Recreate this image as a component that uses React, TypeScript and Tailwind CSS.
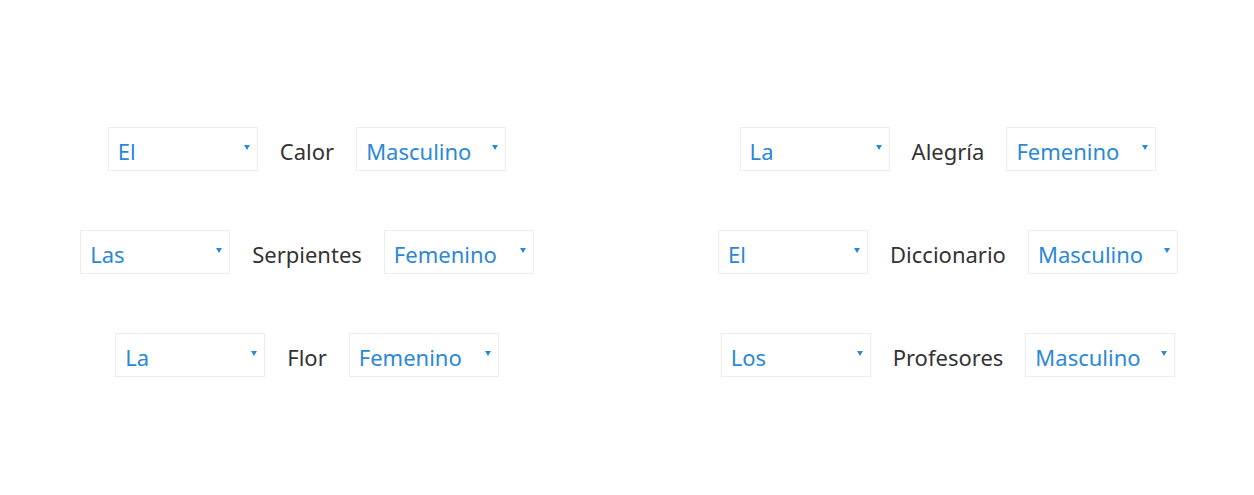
import React from "react";

type Row = { art: string; noun: string; gender: string };

const left: Row[] = [
  { art: "El", noun: "Calor", gender: "Masculino" },
  { art: "Las", noun: "Serpientes", gender: "Femenino" },
  { art: "La", noun: "Flor", gender: "Femenino" },
];
const right: Row[] = [
  { art: "La", noun: "Alegría", gender: "Femenino" },
  { art: "El", noun: "Diccionario", gender: "Masculino" },
  { art: "Los", noun: "Profesores", gender: "Masculino" },
];

function Select({ value }: { value: string }) {
  return (
    <div className="relative flex h-[44px] w-[150px] items-center border border-[#ececec] bg-white pl-[9px] text-[#2b88d8]">
      <span className="pt-[3px] leading-none">{value}</span>
      <svg
        className="absolute right-[7px] top-[17px]"
        width="6"
        height="5"
        viewBox="0 0 6 5"
      >
        <path d="M0 0H6L3 5Z" fill="#2b88d8" />
      </svg>
    </div>
  );
}

function Column({ rows }: { rows: Row[] }) {
  return (
    <div className="flex w-[560px] flex-col items-center gap-[59px]">
      {rows.map((r, i) => (
        <div key={i} className="flex items-center gap-[22px]">
          <Select value={r.art} />
          <span className="pt-[3px] leading-none text-[#333333]">{r.noun}</span>
          <Select value={r.gender} />
        </div>
      ))}
    </div>
  );
}

export default function App() {
  return (
    <div
      className="flex h-[495px] w-full justify-center gap-[81px] bg-white pl-[1px] pt-[127px] text-[22px]"
      style={{ fontFamily: '"Noto Sans", "Open Sans", sans-serif' }}
    >
      <Column rows={left} />
      <Column rows={right} />
    </div>
  );
}
